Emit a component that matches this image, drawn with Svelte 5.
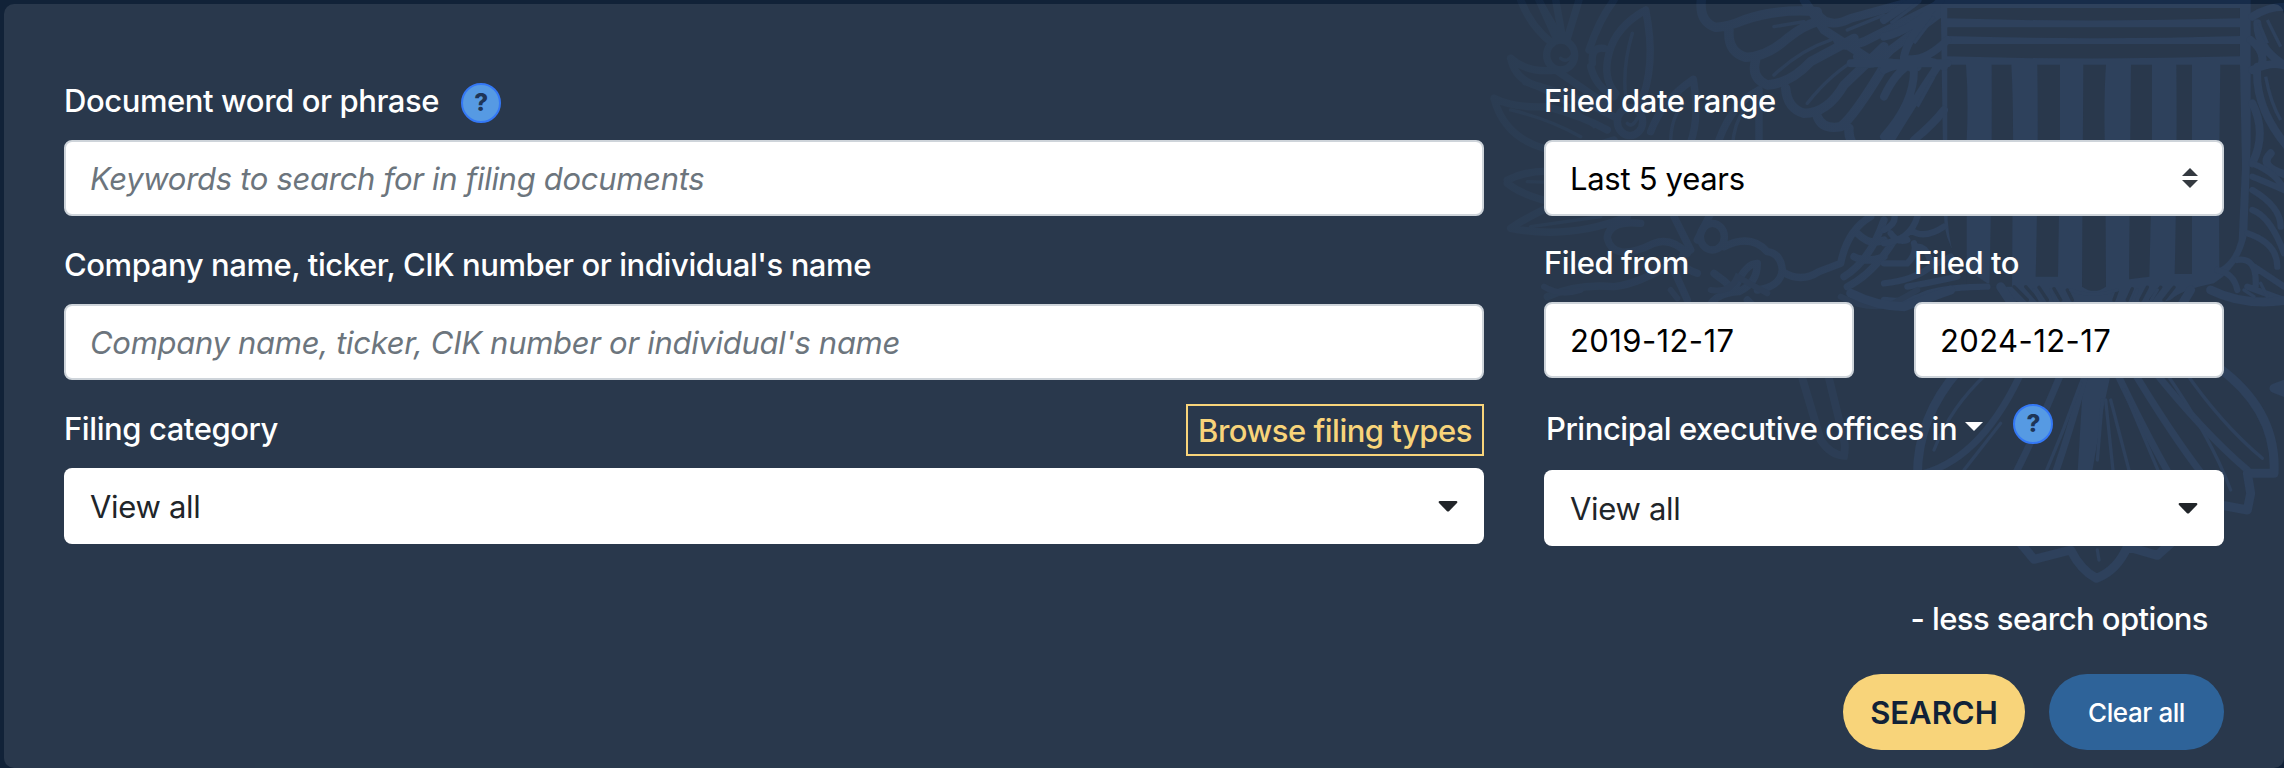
<script>
  let keywords = $state('');
  let company = $state('');
  let from = $state('2019-12-17');
  let to = $state('2024-12-17');

  const shieldBars = [
    'M190 194H246Q254 300 248 420V860Q190 760 190 620Z',
    'M323 194H382Q388 300 387 440L384 860H316Q325 500 323 194Z',
    'M460 194H528V440L522 830H455Q464 500 460 194Z',
    'M598 194H666Q658 300 664 500L666 860Q630 885 594 860Z',
    'M741 194H804V500L796 830L735 838Q738 500 741 194Z',
    'M877 194H924V822H872Q880 500 877 194Z',
    'M1009 194H1068L1074 500L1064 720Q1050 780 1006 805Q1004 500 1009 194Z'
  ];
  const shieldStripes = [[24, 36], [82, 31], [132, 42]];
  const rays = [
    'M610 230Q560 420 510 560', 'M690 230Q780 420 860 560', 'M740 230Q860 430 960 560',
    'M800 230Q960 430 1090 540', 'M540 230Q470 400 390 560', 'M420 230Q300 500 120 550'
  ];
  const thinRays = [
    'M590 280Q540 420 480 560', 'M655 330L640 510', 'M665 330L690 570', 'M680 330L740 560',
    'M720 300L830 560', 'M840 240Q980 440 1040 600', 'M900 240Q1010 400 1135 505',
    'M310 250Q200 350 150 480', 'M350 400L240 540', 'M640 780L645 810'
  ];
</script>

<main>
  <svg class="seal" viewBox="0 0 800 768" width="800" height="768" aria-hidden="true">
    <defs>
      <linearGradient id="ink" gradientUnits="userSpaceOnUse" x1="0" y1="0" x2="1300" y2="0">
        <stop offset="0" stop-color="#13263f" />
        <stop offset="1" stop-color="#172c4a" />
      </linearGradient>
    </defs>

    <g transform="scale(.33333)" fill="none" stroke="url(#ink)" stroke-linecap="round" stroke-linejoin="round">
      <g stroke-width="22">
        <path stroke-width="28" d="M652 0Q645 65 695 82Q735 80 780 60Q880 25 1000 35M735 90Q730 155 785 172Q850 170 910 115Q960 75 1000 65M815 180Q800 235 850 255Q920 250 980 185L1110 115M905 265Q910 325 960 340Q1030 340 1080 255L1200 140M1000 350Q1015 390 1070 380Q1110 350 1200 200M1095 385Q1090 420 1130 470" />
        <path stroke-width="26" d="M1000 40Q1030 90 1100 55L1300 0M1060 120Q1070 150 1140 125L1370 10M1120 170Q1160 220 1220 150L1380 30M960 0L1020 90L1160 180L1300 200" />
        <path d="M110 0Q140 80 205 130M165 0L215 110M215 0L235 110M285 0L250 115M390 0Q345 60 315 150" />
        <ellipse cx="230" cy="165" rx="42" ry="45" />
        <path d="M80 175Q130 220 215 210Q290 260 360 310M80 175Q95 245 170 260Q280 290 390 350M30 295Q90 325 190 320Q300 350 370 390M30 295Q60 410 180 445Q280 460 390 420" />
        <path d="M485 30Q395 80 375 160Q355 235 395 280M485 30Q520 200 465 320M325 190Q320 140 360 145M320 200Q335 260 390 290" />
        <ellipse cx="438" cy="365" rx="38" ry="42" />
        <path d="M628 238Q535 300 500 395M628 238Q650 370 610 450M825 270Q745 310 705 420M825 270V450" />
        <path d="M70 540Q150 500 260 520M70 550Q120 590 220 610Q130 650 80 685Q260 720 430 650M370 710Q380 660 470 670M370 715Q390 790 510 730Q560 710 610 760" />
        <ellipse cx="685" cy="710" rx="36" ry="40" />
        <path d="M570 650L620 750M680 640L640 720M720 740Q800 700 850 755Q890 760 895 810Q890 860 820 870M600 760Q580 800 640 820M190 890Q280 850 390 860Q470 850 560 790M560 790L610 900M690 820Q720 840 750 870M755 860Q785 790 820 790Q820 850 765 875Q680 880 670 940M790 900L850 960" />
        <path d="M895 815Q950 850 1005 815L1070 790Q1090 690 1160 650M1080 830Q1160 780 1200 660M1090 860Q1170 820 1230 720M1120 700Q1160 740 1200 720M1110 770Q1150 790 1200 770" />
      </g>
      <g stroke-width="10">
        <path d="M175 10L225 95M445 100Q415 200 425 290M120 250Q240 290 330 380M80 330Q190 355 290 410M600 310Q560 350 560 430M780 330Q750 370 745 440M870 225Q950 150 1040 120M970 310Q1040 220 1130 170M870 80L960 65M1090 90L1200 45M130 545L300 550M140 680L350 650M230 175Q250 190 265 165M430 370Q445 385 460 355" />
      </g>
    </g>

    <g transform="translate(400 0) scale(.33333)">
      <path fill="#172c4a" d="M170 0H1100V430L1090 700Q1070 800 990 850Q890 870 860 900L640 960L380 900Q370 860 310 850Q180 770 180 650Z" />
      <g fill="#112238">
        {#each shieldStripes as [y, h]}
          <path d="M190 {y}H1068V{y + h - 5}Q630 {y + h + 8} 190 {y + h - 5}Z" />
        {/each}
        {#each shieldBars as d}<path {d} />{/each}
      </g>
      <g fill="none" stroke="#172c4a" stroke-width="24" stroke-linecap="round">
        <path d="M0 60L90 0M0 110Q90 90 170 0M60 170Q70 120 130 50M60 175Q120 190 190 120M-100 190H190M0 290Q70 140 180 200M0 210Q60 180 90 210Q90 310 0 410M20 420Q80 320 160 200M90 420Q150 370 180 330" />
        <path d="M1105 50Q1150 20 1200 20M1120 70Q1120 150 1210 200M1100 120Q1150 160 1130 200M1105 210Q1170 180 1210 200M1120 200Q1110 320 1210 440M1105 310Q1150 400 1105 490M1160 460Q1120 500 1210 525" />
        <path stroke-width="19" d="M1105 490Q1180 520 1200 570Q1130 540 1105 530M1105 570Q1190 620 1190 680M1105 630Q1160 650 1200 760M1090 700Q1180 730 1180 800M1000 810Q1050 820 1060 870M1060 780Q1120 770 1115 860M1090 860L1200 900M1110 800L1200 860" />
        <path d="M0 690Q40 670 30 640M0 730Q80 720 100 650M20 700Q40 730 70 720M80 690Q120 720 180 680M100 740Q130 740 140 790M0 790L70 790Q100 760 90 730M0 850Q90 840 140 800L200 770M70 860Q130 850 220 830M130 880Q200 860 310 860M0 900Q70 910 130 880" stroke-width="19" />
      </g>
      <g stroke="#112238" stroke-width="10" stroke-linecap="round">
        <path d="M390 860L430 900M425 860L460 900M465 862L490 900M510 866L530 900M550 870L565 900M700 872L690 900M745 866L730 900M790 862L770 900M830 862L800 900M870 862L840 900" />
      </g>
      <g fill="none" stroke="#172c4a" stroke-width="10"><path d="M90 130L150 50M100 320L150 230M20 70L100 10M1150 60L1190 140M1145 230Q1160 310 1190 360M1125 70L1150 130" /></g>
    </g>

    <g transform="translate(0 290) scale(.33333)" fill="none" stroke="#152842" stroke-linecap="round">
      <path stroke-width="24" d="M955 265L1010 450Q1040 495 1080 497Q1085 470 1080 450L1035 265" />
      <path stroke-width="18" d="M1070 20Q1140 60 1220 45L1300 0M180 -10Q230 20 290 0M560 0L580 25M680 0Q740 10 760 -40L850 10" />
    </g>

    <g transform="translate(400 290) scale(.33333)" fill="none" stroke="#172c4a" stroke-linecap="round" stroke-linejoin="round">
      <path fill="#172c4a" d="M600 230H685L655 370L622 560H580Z" stroke="none" />
      <g stroke-width="21">
        {#each rays as d}<path {d} />{/each}
        <path stroke-width="27" d="M225 240Q100 380 100 560M1000 230Q1180 360 1170 550L1090 550L1100 610L1090 660L1010 645M410 760L450 808L560 780Q590 840 637 865Q700 840 730 770L820 796L860 760M980 0Q1080 50 1210 30M1210 280L1170 295L1210 310M350 -10L390 50M920 0L890 50M-100 10Q-20 50 60 50L200 0" />
      </g>
      <g stroke-width="10">{#each thinRays as d}<path {d} />{/each}</g>
      <path stroke-width="10" d="M450 0L480 50M500 0L520 50M560 0Q620 25 700 0M760 0L740 50M820 0L790 50M1080 0L1110 20M1130 -20L1150 20" />
    </g>
  </svg>

  <form class="panel" onsubmit={(e) => e.preventDefault()}>
    <div class="columns">
      <section class="column">
        <div class="field">
          <div class="label"><label for="keywords">Document word or phrase</label>{@render help('top')}</div>
          <input id="keywords" class="control" placeholder="Keywords to search for in filing documents" bind:value={keywords} />
        </div>
        <div class="field">
          <div class="label"><label for="company">Company name, ticker, CIK number or individual's name</label></div>
          <input id="company" class="control" placeholder="Company name, ticker, CIK number or individual's name" bind:value={company} />
        </div>
        <div class="field">
          <div class="label split"><span>Filing category</span><button type="button" class="browse">Browse filing types</button></div>
          <button type="button" class="control dropdown"><span>View all</span>{@render caret()}</button>
        </div>
      </section>

      <section class="column">
        <div class="field">
          <div class="label"><span>Filed date range</span></div>
          <button type="button" class="control dropdown bordered">
            <span>Last 5 years</span>
            <svg class="updown" viewBox="0 0 16 20" width="16" height="20"><path d="M0 8L8 0L16 8ZM0 12H16L8 20Z" fill="#343a40" /></svg>
          </button>
        </div>
        <div class="dates">
          <div class="field">
            <div class="label"><label for="from">Filed from</label></div>
            <input id="from" class="control" bind:value={from} />
          </div>
          <div class="field">
            <div class="label"><label for="to">Filed to</label></div>
            <input id="to" class="control" bind:value={to} />
          </div>
        </div>
        <div class="field offices">
          <div class="label">
            <span class="office-label">Principal executive offices in</span>
            <svg class="small-caret" viewBox="0 0 18 9" width="18" height="9"><path d="M0 0H18L9 9Z" fill="#fff" /></svg>
            {@render help('office')}
          </div>
          <button type="button" class="control dropdown"><span>View all</span>{@render caret()}</button>
        </div>
      </section>
    </div>

    <footer>
      <button type="button" class="less">- less search options</button>
      <div class="actions">
        <button class="search">SEARCH</button>
        <button type="reset" class="clear">Clear all</button>
      </div>
    </footer>
  </form>
</main>

{#snippet help(kind)}
  <button type="button" class="help {kind}" aria-label="Help">?</button>
{/snippet}

{#snippet caret()}
  <svg class="caret" viewBox="0 0 20 11" width="20" height="11"><path d="M1.5 0H18.5Q20 .7 19 2L11 10.2Q10 11 9 10.2L1 2Q0 .7 1.5 0Z" fill="#212529" /></svg>
{/snippet}

<style>
  :global(body) { background: #112238; }
  * { box-sizing: border-box; }
  main {
    position: relative;
    width: 2284px;
    height: 768px;
    padding: 4px 0 0 4px;
    overflow: hidden;
    background: #112238;
    font-family: Inter, sans-serif;
    font-size: 31px;
    font-weight: 450;
    letter-spacing: -.42px;
    color: #fff;
  }
  .seal { position: absolute; top: 0; right: 0; }
  .panel {
    position: relative;
    height: 764px;
    padding: 72px 60px 0;
    border-radius: 10px;
    background: rgba(255, 255, 255, .1);
  }
  .columns { display: grid; grid-template-columns: 1420px 680px; column-gap: 60px; }
  .column { display: flex; flex-direction: column; gap: 24px; min-width: 0; }
  .field { display: flex; flex-direction: column; min-width: 0; }
  .label { display: flex; height: 64px; line-height: 49px; white-space: nowrap; }
  .split { justify-content: space-between; }
  .dates { display: grid; grid-template-columns: 310px 310px; column-gap: 60px; }
  .dates .label { height: 62px; line-height: 46px; }
  .offices { padding-top: 2px; }
  .offices .label { height: 66px; }
  button { font: inherit; letter-spacing: inherit; border: 0; margin: 0; cursor: pointer; }
  .control {
    width: 100%;
    height: 76px;
    padding: 0 24px;
    border: 2px solid #ced4da;
    border-radius: 8px;
    background: #fff;
    color: #000;
    font: inherit;
    font-weight: 400;
    letter-spacing: -.3px;
    outline: none;
  }
  .dates .control { letter-spacing: .4px; }
  .control::placeholder { color: #6c757d; font-style: italic; opacity: 1; }
  .dropdown { display: flex; align-items: center; justify-content: space-between; border: 0; padding: 0 26px; color: #212529; }
  .bordered { border: 2px solid #ced4da; padding: 0 24px; color: #000; }
  .help {
    width: 40px;
    height: 40px;
    padding: 0;
    border: 2px solid #3478f6;
    border-radius: 50%;
    background: #569ae3;
    color: #1e3557;
    font-size: 24px;
    font-weight: 800;
    line-height: 36px;
    text-align: center;
  }
  .top { margin: 7px 0 0 22px; }
  .office { margin: 0 0 0 30px; }
  .office-label { margin-left: 2px; letter-spacing: -.46px; }
  .small-caret { margin: 18px 0 0 8px; }
  .browse {
    width: 298px;
    height: 52px;
    padding: 2px 0 0;
    border: 2px solid #f8d47a;
    background: transparent;
    color: #f8d47a;
    line-height: 46px;
    letter-spacing: -.5px;
  }
  footer { display: flex; flex-direction: column; align-items: flex-end; padding-top: 48px; }
  .less { height: 50px; margin-right: 16px; padding: 0; background: none; color: #fff; line-height: 50px; letter-spacing: -.58px; }
  .actions { display: flex; gap: 24px; margin-top: 30px; }
  .actions button { height: 76px; padding: 0; border-radius: 38px; }
  .search { width: 182px; background: #f8d47a; color: #112238; font-weight: 600; letter-spacing: 0; }
  .clear { width: 175px; background: #2e6399; color: #fff; font-size: 26px; }
</style>
